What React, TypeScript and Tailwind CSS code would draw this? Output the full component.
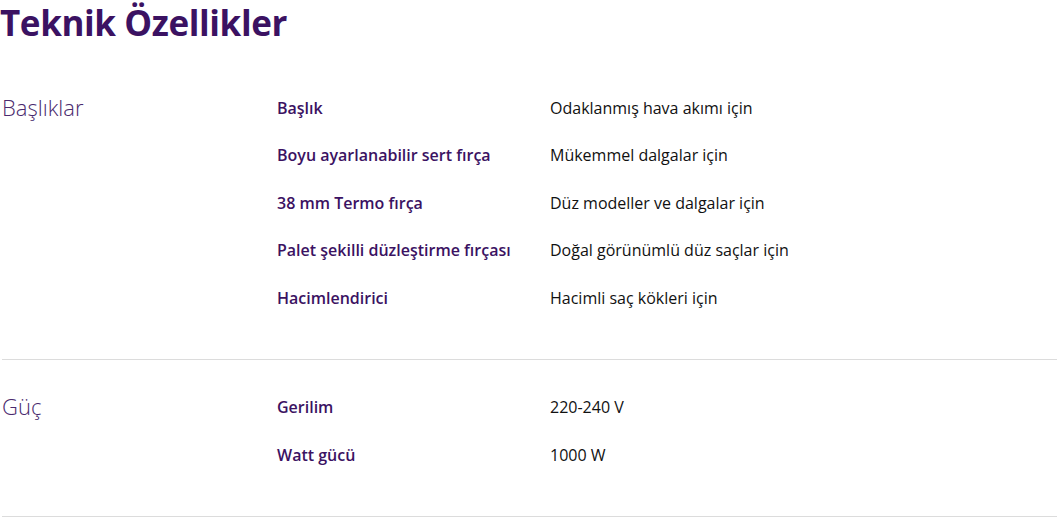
import React from 'react';

type Row = { label: string; value: string };
type Section = { title: string; rows: Row[] };

const SECTIONS: Section[] = [
  {
    title: 'Başlıklar',
    rows: [
      { label: 'Başlık', value: 'Odaklanmış hava akımı için' },
      { label: 'Boyu ayarlanabilir sert fırça', value: 'Mükemmel dalgalar için' },
      { label: '38 mm Termo fırça', value: 'Düz modeller ve dalgalar için' },
      { label: 'Palet şekilli düzleştirme fırçası', value: 'Doğal görünümlü düz saçlar için' },
      { label: 'Hacimlendirici', value: 'Hacimli saç kökleri için' },
    ],
  },
  {
    title: 'Güç',
    rows: [
      { label: 'Gerilim', value: '220-240 V' },
      { label: 'Watt gücü', value: '1000 W' },
    ],
  },
];

export default function App(): JSX.Element {
  return (
    <div className="min-h-screen bg-white font-['Open_Sans',sans-serif]">
      <h1 className="h-[60px] text-[35px] leading-[46px] font-bold tracking-[-0.4px] text-[#3b1262]">
        Teknik Özellikler
      </h1>
      {SECTIONS.map((s) => (
        <section key={s.title} className="ml-[2px] flex border-b border-[#dcdcdc] pt-[24px] pb-[37px]">
          <div className="w-[275px] shrink-0">
            <div className="flex h-[46px] items-center text-[22px] font-light text-[#4a2a6e]">{s.title}</div>
          </div>
          <div className="flex flex-col">
            {s.rows.map((r) => (
              <div key={r.label} className="flex h-[47.5px] items-center text-[16px]">
                <span className="w-[273px] shrink-0 font-semibold text-[#3b1262]">{r.label}</span>
                <span className="text-[#111111]">{r.value}</span>
              </div>
            ))}
          </div>
        </section>
      ))}
    </div>
  );
}
